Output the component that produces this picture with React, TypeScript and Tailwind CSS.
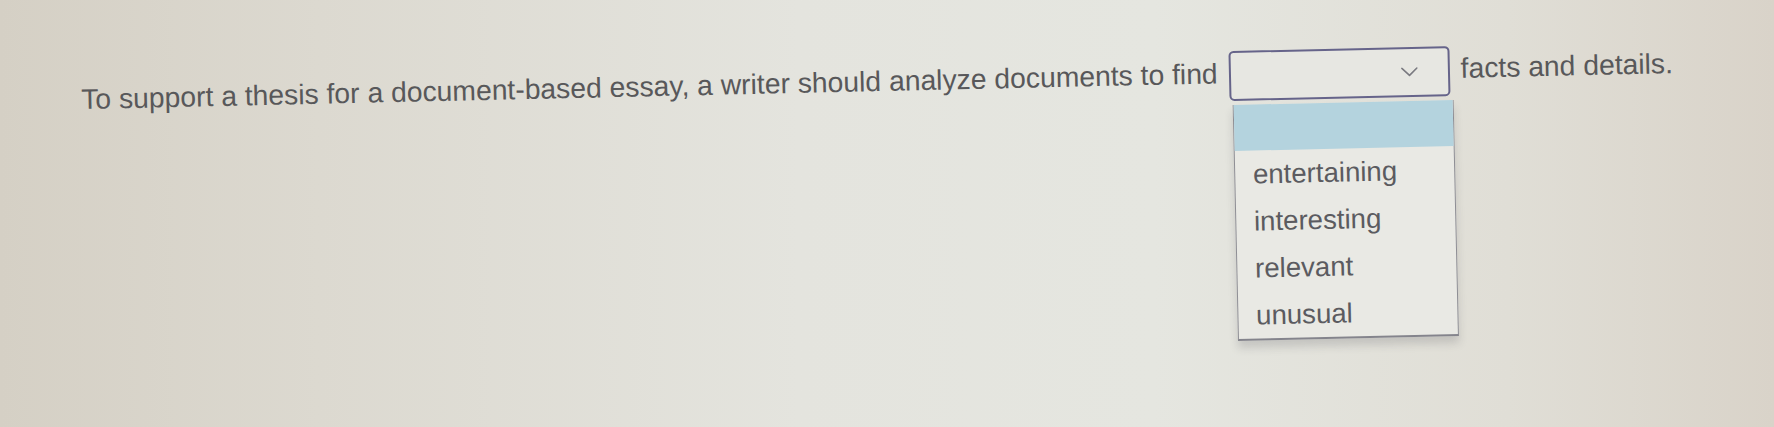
import React from "react";

const options = ["entertaining", "interesting", "relevant", "unusual"];

function Chevron() {
  return (
    <svg width="17" height="10" viewBox="0 0 17 10" fill="none">
      <path d="M1 1.2 L8.5 8.4 L16 1.2" stroke="#7a7a80" strokeWidth="1.6" strokeLinecap="round" strokeLinejoin="round" />
    </svg>
  );
}

export default function App() {
  return (
    <div className="w-[1774px] h-[427px] overflow-hidden bg-[linear-gradient(90deg,#d5d0c5_0%,#dcd9d0_18%,#e4e4de_45%,#e5e6e0_65%,#e0ded6_85%,#d9d3c9_100%)] font-['Liberation_Sans',Arial,sans-serif]">
      {/* the whole sentence sits on a slightly tilted line */}
      <div className="origin-[1232px_76px] -rotate-[1.3deg] pt-[51px] pl-[81px]">
        <div className="flex items-center text-[28.3px] leading-[28px] text-[#58585a]">
          <span className="whitespace-nowrap pb-[6px]">
            To support a thesis for a document-based essay, a writer should analyze documents to find
          </span>
          <div className="relative ml-[11px] flex h-[50px] w-[221px] shrink-0 items-center justify-end rounded-[5px] border-2 border-[#66648a] bg-[#e7e7e2] pr-[30px]">
            <Chevron />
            {/* open option list */}
            <div className="absolute left-[1px] top-[52px] w-[221px] border-x-[1.5px] border-b-2 border-x-[#8e8e94] border-b-[#84848c] bg-[#e9e9e4] shadow-[0_7px_8px_rgba(60,60,70,0.18)]">
              <div className="h-[46px] bg-[#b4d3de]" />
              {options.map((o) => (
                <div key={o} className="flex h-[47px] items-center pl-[18px] text-[27.6px] text-[#5b5b60]">
                  {o}
                </div>
              ))}
            </div>
          </div>
          <span className="ml-[11px] whitespace-nowrap pb-[6px]">facts and details.</span>
        </div>
      </div>
    </div>
  );
}
